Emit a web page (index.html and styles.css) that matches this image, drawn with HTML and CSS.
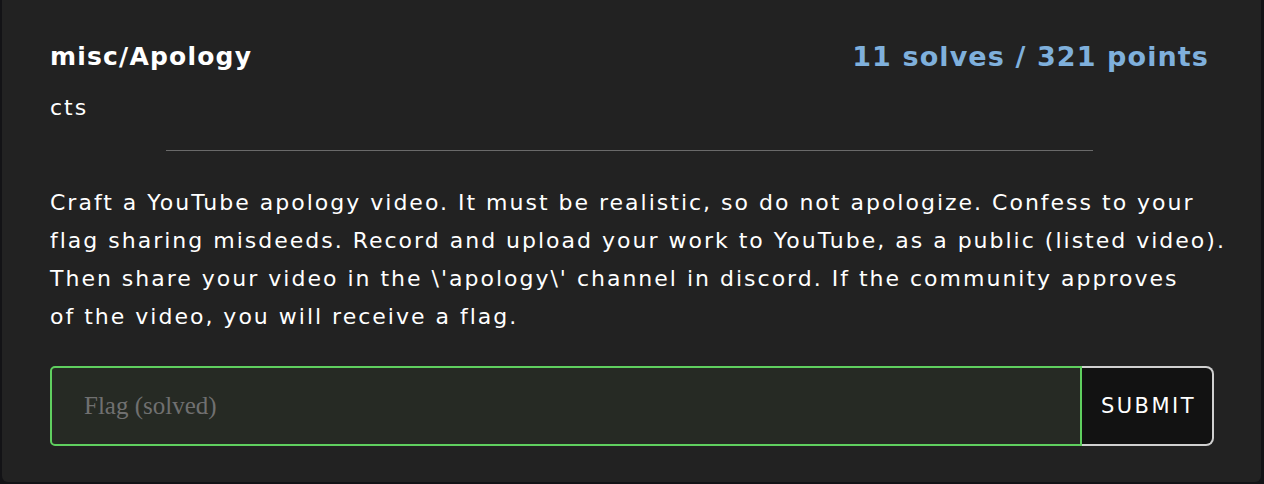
FILE: index.html
```html
<!DOCTYPE html>
<html>
<head>
<meta charset="utf-8">
<link rel="stylesheet" href="styles.css">
</head>
<body>
<div class="card">
  <div class="head">
    <div class="titles">
      <h1 class="title">misc/Apology</h1>
      <div class="author">cts</div>
    </div>
    <div class="score">11 solves / 321 points</div>
  </div>
  <hr class="divider">
  <p class="desc">Craft a YouTube apology video. It must be realistic, so do not apologize. Confess to your<br>flag sharing misdeeds. Record and upload your work to YouTube, as a public (listed video).<br>Then share your video in the \'apology\' channel in discord. If the community approves<br>of the video, you will receive a flag.</p>
  <form class="flag-form">
    <input class="flag-input" type="text" placeholder="Flag (solved)">
    <button class="submit" type="button">SUBMIT</button>
  </form>
</div>
</body>
</html>
```

FILE: styles.css
```css
html, body {
  margin: 0;
  padding: 0;
  background: #131316;
}
body {
  font-family: "Comic Sans MS", "DejaVu Sans", sans-serif;
  color: #fff;
}
.card {
  box-sizing: border-box;
  margin: 0 3px 2px 2px;
  height: 482px;
  background: #222222;
  border-radius: 0 0 6px 6px;
  padding: 37px 52px 0 48px;
}
.head {
  display: flex;
  justify-content: space-between;
  align-items: flex-start;
}
.title {
  margin: 0;
  font-size: 25px;
  font-weight: 700;
  line-height: 40px;
  letter-spacing: 1.2px;
}
.author {
  margin-top: 16px;
  font-size: 22px;
  line-height: 30px;
  letter-spacing: 2px;
}
.score {
  color: #7fb0dc;
  font-weight: 700;
  font-size: 27px;
  line-height: 40px;
  letter-spacing: 1.1px;
}
.divider {
  width: 80%;
  margin: 27px auto 33px;
  border: 0;
  border-top: 1px solid #6a6a6a;
  height: 0;
}
.desc {
  margin: 0;
  font-size: 22px;
  line-height: 38px;
  letter-spacing: 2px;
  white-space: nowrap;
}
.flag-form {
  display: flex;
  margin-top: 30px;
  width: 1164px;
}
.flag-input {
  flex: 1;
  box-sizing: border-box;
  height: 80px;
  background: #262a24;
  border: 2px solid #5fcf5f;
  border-radius: 5px 0 0 5px;
  padding: 0 32px;
  font-family: "Liberation Serif", serif;
  font-size: 25px;
  color: #ddd;
  outline: none;
}
.flag-input::placeholder {
  color: #707070;
}
.submit {
  box-sizing: border-box;
  width: 132px;
  height: 80px;
  background: #121212;
  border: 2px solid #d0d0d0;
  border-left: 0;
  border-radius: 0 8px 8px 0;
  color: #fff;
  font-family: "Comic Sans MS", "DejaVu Sans", sans-serif;
  font-size: 21px;
  letter-spacing: 2.5px;
  padding: 0 0 0 3px;
}
```
